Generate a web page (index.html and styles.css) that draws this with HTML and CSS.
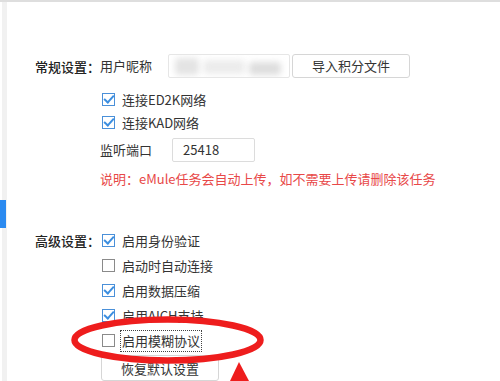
FILE: index.html
```html
<!DOCTYPE html>
<html lang="zh-CN">
<head>
<meta charset="utf-8">
<link rel="stylesheet" href="styles.css">
</head>
<body>
<div class="topbar"></div>
<div class="frame">
  <div class="rail"><div class="rail-active"></div></div>
  <div class="content">
    <section class="group group-basic">
      <div class="label">常规设置：</div>
      <div class="opts">
        <div class="row row-nick">
          <span class="text">用户昵称</span>
          <div class="input nick"><span class="blur b1"></span><span class="blur b2"></span><span class="blur b3"></span></div>
          <button class="btn import">导入积分文件</button>
        </div>
        <label class="row chk-row first"><span class="chk on"></span><span class="text">连接ED2K网络</span></label>
        <label class="row chk-row"><span class="chk on"></span><span class="text">连接KAD网络</span></label>
        <div class="row port-row">
          <span class="text">监听端口</span>
          <div class="input port">25418</div>
        </div>
        <div class="row note">说明：eMule任务会自动上传，如不需要上传请删除该任务</div>
      </div>
    </section>
    <section class="group group-adv">
      <div class="label">高级设置：</div>
      <div class="opts">
        <label class="row adv-row"><span class="chk on"></span><span class="text">启用身份验证</span></label>
        <label class="row adv-row"><span class="chk"></span><span class="text">启动时自动连接</span></label>
        <label class="row adv-row"><span class="chk on"></span><span class="text">启用数据压缩</span></label>
        <label class="row adv-row"><span class="chk on"></span><span class="text">启用AICH支持</span></label>
        <label class="row adv-row"><span class="chk"></span><span class="text focus">启用模糊协议</span></label>
        <button class="btn reset">恢复默认设置</button>
      </div>
    </section>
  </div>
</div>
<svg class="markup" width="500" height="381" viewBox="0 0 500 381">
  <ellipse cx="167.5" cy="340" rx="93" ry="20.5" fill="none" stroke="#ee1d1d" stroke-width="6.5"/>
  <polygon points="239,362 230,381 249,381" fill="#ee1d1d"/>
</svg>
</body>
</html>
```
FILE: styles.css
```css
html, body {
  margin: 0;
  padding: 0;
  background: #fff;
  width: 500px;
  height: 381px;
  overflow: hidden;
  font-family: "Noto Sans CJK SC", "Noto Sans", sans-serif;
  font-size: 13px;
  color: #333;
}
.topbar {
  height: 2px;
  background: #dedede;
}
.frame {
  display: flex;
  height: 379px;
}
.rail {
  width: 8px;
  position: relative;
  background: linear-gradient(to right, #fff 0, #fff 2px, #f1f1f1 2px, #f1f1f1 7px, #fff 7px);
}
.rail-active {
  position: absolute;
  left: 0;
  top: 198px;
  width: 6px;
  height: 28px;
  background: #2b8af0;
}
.content {
  padding: 51px 0 0 27px;
  flex: 1;
}
.group {
  display: grid;
  grid-template-columns: 65px 1fr;
}
.label {
  color: #222;
  font-weight: 500;
  line-height: 25px;
  height: 25px;
  white-space: nowrap;
}
.group-basic .label { line-height: 27px; }
.opts {
  display: flex;
  flex-direction: column;
}
.row {
  display: flex;
  align-items: center;
  white-space: nowrap;
}
.text {
  line-height: 18px;
  color: #333;
}
.row-nick {
  height: 25px;
}
.input {
  box-sizing: border-box;
  border: 1px solid #dcdcdc;
  background: #fff;
  height: 24px;
  border-radius: 2px;
}
.nick {
  width: 122px;
  margin-left: 16px;
  position: relative;
  overflow: hidden;
  border-color: #e6e6e6;
}
.blur {
  position: absolute;
  filter: blur(3px);
  border-radius: 4px;
}
.b1 { left: 6px; top: 3px; width: 24px; height: 17px; background: #e4e4e4; }
.b2 { left: 34px; top: 5px; width: 42px; height: 14px; background: #ececec; }
.b3 { left: 80px; top: 7px; width: 32px; height: 13px; background: #dedede; }
.btn {
  box-sizing: border-box;
  font-family: inherit;
  font-size: 13px;
  color: #333;
  background: #fff;
  border: 1px solid #d6d6d6;
  border-radius: 3px;
  height: 24px;
  padding: 0;
}
.import {
  width: 118px;
  margin-left: 2px;
}
.chk-row {
  height: 23px;
}
.chk-row.first {
  margin-top: 10px;
}
.chk {
  box-sizing: border-box;
  width: 13px;
  height: 13px;
  border: 1px solid #8a8a8a;
  background: #fff;
  margin-left: 2px;
  margin-right: 7px;
  flex: none;
  position: relative;
}
.chk.on {
  border-color: #4a90d9;
}
.chk.on::after {
  content: "";
  position: absolute;
  left: 3px;
  top: -1px;
  width: 4px;
  height: 8px;
  border-right: 2px solid #3b8ee0;
  border-bottom: 2px solid #3b8ee0;
  transform: rotate(42deg);
}
.port-row {
  height: 24px;
  margin-top: 4px;
}
.port {
  width: 83px;
  margin-left: 20px;
  padding-left: 10px;
  line-height: 22px;
  color: #333;
}
.note {
  height: 22px;
  margin-top: 5px;
  color: #e84848;
}
.group-adv {
  margin-top: 39px;
}
.adv-row {
  height: 25px;
}
.focus {
  outline: 1px dotted #444;
  outline-offset: 1px;
}
.reset {
  width: 118px;
  height: 26px;
  margin-top: 2px;
  margin-left: 1px;
}
.markup {
  position: absolute;
  left: 0;
  top: 0;
  pointer-events: none;
}
```
